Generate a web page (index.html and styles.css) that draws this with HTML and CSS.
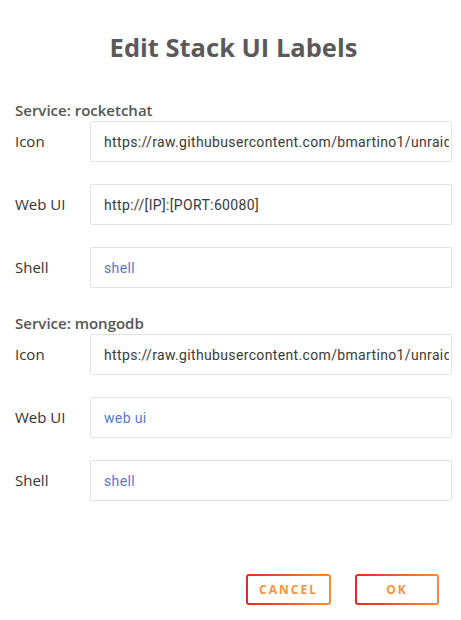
FILE: index.html
```html
<!DOCTYPE html>
<html>
<head>
<meta charset="utf-8">
<link rel="stylesheet" href="styles.css">
</head>
<body>
<div class="dialog">
  <h1 class="title">Edit Stack UI Labels</h1>

  <section class="service">
    <h2 class="service-name">Service: rocketchat</h2>
    <div class="fields">
      <label class="field-label">Icon</label>
      <input class="field-input" type="text" value="https://raw.githubusercontent.com/bmartino1/unraid-docker-templates/main/images/rocketchat.png">
      <label class="field-label">Web UI</label>
      <input class="field-input" type="text" value="http://[IP]:[PORT:60080]">
      <label class="field-label">Shell</label>
      <input class="field-input" type="text" placeholder="shell">
    </div>
  </section>

  <section class="service">
    <h2 class="service-name">Service: mongodb</h2>
    <div class="fields">
      <label class="field-label">Icon</label>
      <input class="field-input" type="text" value="https://raw.githubusercontent.com/bmartino1/unraid-docker-templates/main/images/mongodb.png">
      <label class="field-label">Web UI</label>
      <input class="field-input" type="text" placeholder="web ui">
      <label class="field-label">Shell</label>
      <input class="field-input" type="text" placeholder="shell">
    </div>
  </section>

  <div class="actions">
    <button class="btn btn-cancel">Cancel</button>
    <button class="btn btn-ok">OK</button>
  </div>
</div>
</body>
</html>
```

FILE: styles.css
```css
html, body {
  margin: 0;
  padding: 0;
  background: #ffffff;
}

body {
  font-family: "Open Sans", "Noto Sans", sans-serif;
  color: #333333;
}

.dialog {
  padding: 0 9px 0 15px;
}

.title {
  margin: 0;
  padding-top: 31px;
  font-size: 25.5px;
  line-height: 32px;
  font-weight: 700;
  color: #5a5a5a;
  text-align: center;
}

.service {
  margin-top: 38px;
}

.service + .service {
  margin-top: 26px;
}

.service-name {
  margin: 0 0 2px;
  font-size: 15px;
  line-height: 18px;
  font-weight: 600;
  color: #555555;
}

.fields {
  display: grid;
  grid-template-columns: 75px 1fr;
  grid-auto-rows: 41px;
  row-gap: 22px;
}

.field-label {
  align-self: center;
  font-size: 15px;
  line-height: 20px;
  color: #333333;
  margin-top: -1px;
}

.field-input {
  box-sizing: border-box;
  width: 100%;
  height: 41px;
  margin: 0;
  padding: 0 2px 0 13px;
  border: 1px solid #e3e3e3;
  border-radius: 2px;
  background: #ffffff;
  font-family: Roboto, "Open Sans", sans-serif;
  font-size: 14px;
  letter-spacing: 0.35px;
  color: #3a3a3a;
  outline: none;
}

.field-input::placeholder {
  color: #5579cc;
  opacity: 1;
}

.actions {
  display: flex;
  justify-content: flex-end;
  gap: 24px;
  margin-top: 73px;
  padding-right: 13px;
}

.btn {
  box-sizing: border-box;
  height: 31px;
  padding: 0;
  border: 2px solid transparent;
  border-radius: 3px;
  background:
    linear-gradient(#ffffff, #ffffff) padding-box,
    linear-gradient(90deg, #e22828 0%, #ff8c2f 100%) border-box;
  font-family: "Open Sans", "Noto Sans", sans-serif;
  font-size: 12px;
  font-weight: 700;
  letter-spacing: 2px;
  text-transform: uppercase;
  color: #f7923a;
  cursor: pointer;
}

.btn-cancel {
  width: 85px;
}

.btn-ok {
  width: 84px;
}
```
